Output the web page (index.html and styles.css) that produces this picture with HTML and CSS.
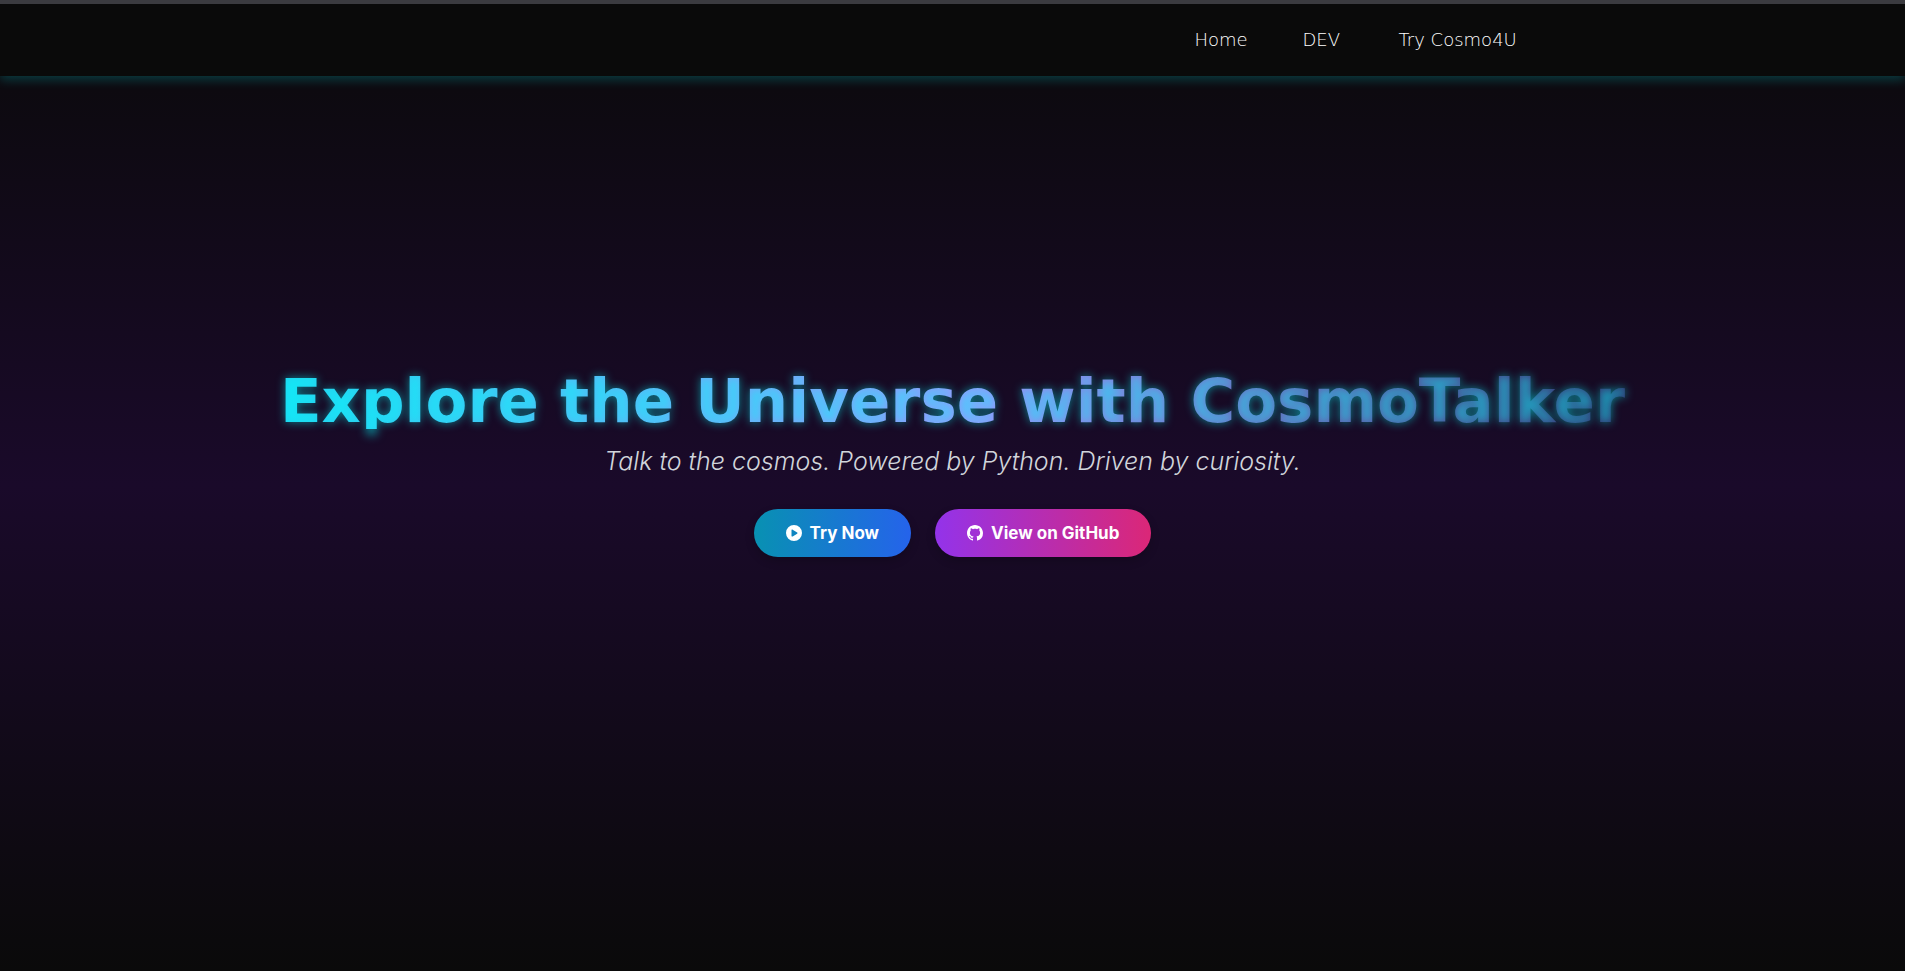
FILE: index.html
```html
<!DOCTYPE html>
<html lang="en">
<head>
<meta charset="utf-8">
<meta name="viewport" content="width=device-width, initial-scale=1">
<title>CosmoTalker</title>
<link rel="stylesheet" href="styles.css">
</head>
<body>
<header class="site-header">
  <nav class="nav" aria-label="Main">
    <a class="nav-link" href="#home">Home</a>
    <a class="nav-link" href="#dev">DEV</a>
    <a class="nav-link" href="#try">Try Cosmo4U</a>
  </nav>
</header>
<main class="hero" id="home">
  <h1 class="hero-title">Explore the Universe with CosmoTalker</h1>
  <p class="hero-tagline">Talk to the cosmos. Powered by Python. Driven by curiosity.</p>
  <div class="actions">
    <a class="button button-try" href="#try">
      <svg class="icon" viewBox="0 0 512 512" aria-hidden="true"><path fill="currentColor" d="M256 0a256 256 0 1 0 0 512A256 256 0 1 0 256 0zM188 147c8-4 17-4 25 1l144 88c7 4 12 12 12 20s-5 16-12 20l-144 88c-8 5-17 5-25 1s-12-12-12-21V168c0-9 4-17 12-21z"/></svg>
      <span>Try Now</span>
    </a>
    <a class="button button-github" href="#github">
      <svg class="icon" viewBox="0 0 16 16" aria-hidden="true"><path fill="currentColor" d="M8 0C3.58 0 0 3.58 0 8c0 3.54 2.29 6.53 5.47 7.59.4.07.55-.17.55-.38 0-.19-.01-.82-.01-1.49-2.01.37-2.53-.49-2.69-.94-.09-.23-.48-.94-.82-1.13-.28-.15-.68-.52-.01-.53.63-.01 1.08.58 1.23.82.72 1.21 1.87.87 2.33.66.07-.52.28-.87.51-1.07-1.78-.2-3.64-.89-3.64-3.95 0-.87.31-1.59.82-2.15-.08-.2-.36-1.02.08-2.12 0 0 .67-.21 2.2.82.64-.18 1.32-.27 2-.27s1.36.09 2 .27c1.53-1.04 2.2-.82 2.2-.82.44 1.1.16 1.92.08 2.12.51.56.82 1.27.82 2.15 0 3.07-1.87 3.75-3.65 3.95.29.25.54.73.54 1.48 0 1.07-.01 1.93-.01 2.2 0 .21.15.46.55.38A8.01 8.01 0 0 0 16 8c0-4.42-3.58-8-8-8z"/></svg>
      <span>View on GitHub</span>
    </a>
  </div>
</main>
</body>
</html>
```
FILE: styles.css
```css
* {
  box-sizing: border-box;
}

body {
  margin: 0;
  min-height: 100vh;
  display: flex;
  flex-direction: column;
  border-top: 4px solid #3b3b40;
  background: linear-gradient(#0a0a0a, #1a0a2a 50%, #0a0a0a);
  color: #fff;
  font-family: Inter, "Open Sans", sans-serif;
}

.site-header {
  background: #0a0a0a;
  box-shadow: 0 4px 10px rgba(0, 255, 255, 0.2);
}

.nav {
  display: grid;
  grid-template-columns: 68px 56px 138px;
  justify-content: end;
  gap: 40px;
  max-width: 1152px;
  margin: 0 auto;
  padding: 24px 0;
}

.nav-link {
  padding: 0 8px;
  color: #fff;
  font-family: "DejaVu Sans", sans-serif;
  font-size: 18px;
  font-weight: 200;
  line-height: 24px;
  text-decoration: none;
  white-space: nowrap;
}

.hero {
  flex: 1;
  display: flex;
  flex-direction: column;
  align-items: center;
  justify-content: center;
  padding: 0 16px 118px;
  text-align: center;
}

.hero-title {
  margin: 0 0 16px;
  font-family: "DejaVu Sans", sans-serif;
  font-size: 61px;
  font-weight: 700;
  line-height: 56px;
  color: transparent;
  background: linear-gradient(to right, #22d3ee, #a78bfa 52%, #332a66);
  -webkit-background-clip: text;
  background-clip: text;
  text-shadow: 0 0 10px rgba(0, 255, 255, 0.5);
}

.hero-tagline {
  margin: 0 0 32px;
  color: #d1d5db;
  font-size: 25px;
  font-style: italic;
  font-weight: 300;
  line-height: 32px;
}

.actions {
  display: flex;
  flex-wrap: wrap;
  justify-content: center;
  gap: 24px;
}

.button {
  display: flex;
  align-items: center;
  justify-content: center;
  gap: 8px;
  padding: 12px 32px;
  border-radius: 24px;
  color: #fff;
  font-size: 17px;
  font-weight: 700;
  line-height: 24px;
  text-decoration: none;
  box-shadow: 0 4px 10px rgba(0, 0, 0, 0.2);
}

.button-try {
  background: linear-gradient(to right, #0891b2, #2563eb);
}

.button-github {
  background: linear-gradient(to right, #9333ea, #db2777);
}

.icon {
  width: 16px;
  height: 16px;
}
```
